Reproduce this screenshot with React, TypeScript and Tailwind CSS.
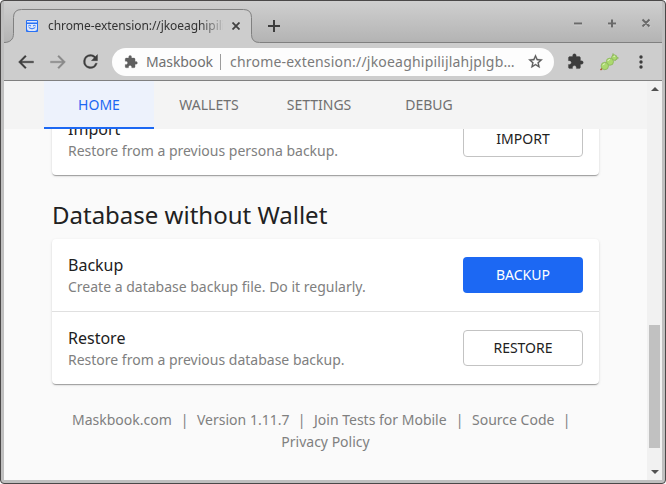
import React from "react";

const PUZZLE =
  "M20.5 11H19V7c0-1.1-.9-2-2-2h-4V3.5a2.5 2.5 0 0 0-5 0V5H4c-1.1 0-1.99.9-1.99 2v3.8H3.5c1.49 0 2.7 1.21 2.7 2.7s-1.21 2.7-2.7 2.7H2V20c0 1.1.9 2 2 2h3.8v-1.5c0-1.49 1.21-2.7 2.7-2.7s2.7 1.21 2.7 2.7V22H17c1.1 0 2-.9 2-2v-4h1.5a2.5 2.5 0 0 0 0-5z";

function Icon({ d, size, className }: { d: string; size: number; className: string }) {
  return (
    <svg width={size} height={size} viewBox="0 0 24 24" fill="currentColor" stroke="currentColor" strokeWidth="0.4" className={`shrink-0 ${className}`}>
      <path d={d} />
    </svg>
  );
}

function Favicon() {
  return (
    <svg width="12" height="12" viewBox="0 0 12 12" className="ml-[13px] shrink-0">
      <rect width="12" height="12" rx="1" fill="#2871f5" />
      <path d="M1 1h10v1.500H1zM1 4h10v4.500a2.500 2.500 0 0 1-2.500 2.500h-5A2.500 2.500 0 0 1 1 8.500z" fill="#dfe8fb" />
      <path d="M2.300 6q1.300-1.300 2.700 0M7 6q1.300-1.300 2.700 0M2.800 7.600q3.200 2.600 6.400 0" stroke="#2871f5" strokeWidth="1" fill="none" />
    </svg>
  );
}

function TabStrip() {
  return (
    <div className="relative h-[42px] shrink-0 bg-linear-to-b from-[#cfcfcf] to-[#b3b3b3]">
      <svg width="658" height="42" viewBox="0 0 658 42" className="absolute top-0 left-0">
        <path
          d="M0 41.5C6 41.5 9.5 38.5 9.5 32.5V16.5Q9.5 8.5 17.5 8.5H239.500Q247.500 8.5 247.500 16.500V33.500Q247.500 41.500 255.500 41.500H658V43H0Z"
          fill="#cdcdcd"
          stroke="#808080"
        />
      </svg>
      <div className="relative flex h-full items-center">
        <div className="flex w-[248px] items-center pt-[8px] pl-[9px]">
          <Favicon />
          <span className="ml-[10px] w-[175px] overflow-hidden text-[12px] leading-[18px] tracking-[-0.07px] whitespace-nowrap text-[#333333] [mask-image:linear-gradient(to_right,black_152px,transparent_178px)]">
            chrome-extension://jkoeaghipili
          </span>
          <svg width="8" height="8" viewBox="0 0 8 8" className="ml-[9px] shrink-0">
            <path d="M.5.5l7 7M7.500.5l-7 7" stroke="#414141" strokeWidth="1.8" />
          </svg>
        </div>
        <svg width="12" height="12" viewBox="0 0 12 12" className="mt-[8px] ml-[16px] shrink-0">
          <path d="M0 6h12M6 0v12" stroke="#3d3d3d" strokeWidth="2" />
        </svg>
        <svg width="77" height="10" viewBox="0 0 77 10" className="mt-[2px] ml-[294px] shrink-0" fill="none">
          <path d="M0 6.500h8M34 6.500h8M38 2.500v8M69 2l7 7M76 2l-7 7" stroke="#e0e0e0" strokeWidth="1.500" />
          <path d="M0 5.500h8M34 5.500h8M38 1.500v8M68.500 1.500l7 7M75.500 1.500l-7 7" stroke="#6a6a6a" strokeWidth="2" />
        </svg>
      </div>
    </div>
  );
}

function Candy() {
  return (
    <svg width="19" height="18" viewBox="0 0 19 18" className="ml-[16px] shrink-0">
      <path d="M.5 17L3 14.500" stroke="#b44a25" strokeWidth="1.500" />
      <path d="M12 4.500L13 .5l2 2.500 3.500 2-3.500 2.500z" fill="#b5df78" stroke="#82ac52" strokeWidth=".6" />
      <g fill="#abd96e" stroke="#86b058" strokeWidth=".7">
        <circle cx="14.300" cy="4.600" r="2.700" />
        <circle cx="9.900" cy="8.700" r="3.600" />
        <circle cx="4.800" cy="13" r="3.700" />
      </g>
      <path d="M2.800 12.300q.5-1.500 2-1.500M7.800 8q.5-1.500 2-1.500M13.500 4q.5-1 1.500-1" stroke="#e6f7cc" fill="none" />
    </svg>
  );
}

function Toolbar() {
  return (
    <div className="flex h-[38px] shrink-0 items-center border-b border-[#808080] bg-[#cdcdcd]">
      <Icon size={20} className="ml-[12px] text-[#3d3d3d]" d="M21 11H6.830l5.580-5.590L11 4l-8 8 8 8 1.410-1.410L6.830 13H21z" />
      <Icon size={20} className="ml-[12px] text-[#898989]" d="M13 4l-1.410 1.410L17.170 11H3v2h14.170l-5.580 5.590L13 20l8-8z" />
      <Icon
        size={21}
        className="ml-[12px] text-[#3d3d3d]"
        d="M17.650 6.350A7.960 7.960 0 0 0 12 4a8 8 0 1 0 7.730 10h-2.080A6 6 0 1 1 12 6c1.660 0 3.140.690 4.220 1.780L13 11h7V4z"
      />
      <div className="ml-[11px] flex h-7 w-[442px] items-center rounded-full bg-[#fdfdfd] text-sm text-[#707070]">
        <Icon size={14} className="ml-[12px] text-[#5f5f5f]" d={PUZZLE} />
        <span className="ml-[8px] w-[68px] tracking-[-0.1px] whitespace-nowrap">Maskbook</span>
        <span className="ml-[6px] h-4 w-px bg-[#9c9c9c]" />
        <span className="ml-[9px] w-[286px] tracking-[0.2px] whitespace-nowrap text-[#7a7a7a]">chrome-extension://jkoeaghipilijlahjplgb…</span>
        <Icon
          size={17}
          className="ml-[11px] text-[#5a5a5a]"
          d="M22 9.240l-7.190-.620L12 2 9.190 8.630 2 9.240l5.460 4.730L5.820 21 12 17.270 18.180 21l-1.630-7.030zM12 15.400l-3.760 2.270 1-4.280-3.320-2.880 4.380-.380L12 6.100l1.710 4.040 4.380.380-3.320 2.880 1 4.280z"
        />
      </div>
      <Icon size={17} className="ml-[13px] text-[#3d3d3d]" d={PUZZLE} />
      <Candy />
      <svg width="4" height="14" viewBox="0 0 4 14" className="ml-[20px] shrink-0" fill="#3d3d3d">
        <circle cx="2" cy="2" r="1.700" />
        <circle cx="2" cy="7" r="1.700" />
        <circle cx="2" cy="12" r="1.700" />
      </svg>
    </div>
  );
}

function Row({ title, text, action, primary }: { title: string; text: string; action: string; primary?: boolean }) {
  return (
    <div className="flex h-[72px] items-center justify-between px-4">
      <div>
        <div className="text-base leading-6 text-[#212121]">{title}</div>
        <div className="text-sm leading-5 text-[#808080]">{text}</div>
      </div>
      <button
        className={
          primary
            ? "h-9 w-[120px] rounded bg-[#1c68f3] text-sm text-white"
            : "h-9 w-[120px] rounded border border-[#c3c3c3] bg-white text-sm text-[#212121]"
        }
      >
        {action}
      </button>
    </div>
  );
}

const CARD = "rounded bg-white shadow-[0_2px_1px_-1px_rgba(0,0,0,0.2),0_1px_1px_0_rgba(0,0,0,0.14),0_1px_3px_0_rgba(0,0,0,0.12)]";

function Page() {
  return (
    <div className="flex min-w-0 flex-1 flex-col bg-[#fafafa]">
      <nav className="flex h-12 shrink-0 bg-[#f4f4f4] pl-10 text-sm text-[#707070]">
        <div className="flex w-[110px] items-center justify-center border-b-2 border-[#1c68f3] bg-[#edf2fc] pt-0.5 text-[#1c68f3]">HOME</div>
        <div className="flex w-[110px] items-center justify-center">WALLETS</div>
        <div className="flex w-[110px] items-center justify-center">SETTINGS</div>
        <div className="flex w-[110px] items-center justify-center">DEBUG</div>
      </nav>
      <main className="min-h-0 flex-1 overflow-hidden px-12">
        <div className={`-mt-[26px] ${CARD}`}>
          <Row title="Import" text="Restore from a previous persona backup." action="IMPORT" />
        </div>
        <h2 className="mt-6 mb-[8px] text-2xl leading-8 text-[#212121]">Database without Wallet</h2>
        <div className={CARD}>
          <Row title="Backup" text="Create a database backup file. Do it regularly." action="BACKUP" primary />
          <div className="h-px bg-[#e0e0e0]" />
          <Row title="Restore" text="Restore from a previous database backup." action="RESTORE" />
        </div>
        <footer className="mt-[25px] text-sm leading-[22px] whitespace-nowrap text-[#808080]">
          <div className="flex pl-5">
            <span className="w-[100px]">Maskbook.com</span>
            <span className="w-[25px] text-center">|</span>
            <span className="w-[92px]">Version 1.11.7</span>
            <span className="w-[25px] text-center">|</span>
            <span className="w-[133px]">Join Tests for Mobile</span>
            <span className="w-[25px] text-center">|</span>
            <span className="w-[82px]">Source Code</span>
            <span className="w-[25px] text-center">|</span>
          </div>
          <div className="text-center">Privacy Policy</div>
        </footer>
      </main>
    </div>
  );
}

function Scrollbar() {
  return (
    <div className="flex w-[15px] shrink-0 flex-col items-center bg-[#f1f1f1]">
      <svg width="8" height="4" viewBox="0 0 8 4" className="mt-[6px] shrink-0">
        <path d="M4 0l4 4H0z" fill="#505050" />
      </svg>
      <div className="mt-[234px] h-[123px] w-[11px] bg-[#c1c1c1]" />
      <svg width="8" height="4" viewBox="0 0 8 4" className="mt-[22px] shrink-0">
        <path d="M0 0h8L4 4z" fill="#505050" />
      </svg>
    </div>
  );
}

export default function App() {
  return (
    <div className="h-[484px] w-[666px] overflow-hidden bg-white font-['Noto_Sans',sans-serif]">
      <div className="flex h-full flex-col overflow-hidden rounded-[4px] border border-[#4a4848] bg-[#bfbfbf] px-[3px] pb-[3px]">
        <TabStrip />
        <Toolbar />
        <div className="flex min-h-0 flex-1">
          <Page />
          <Scrollbar />
        </div>
      </div>
    </div>
  );
}
